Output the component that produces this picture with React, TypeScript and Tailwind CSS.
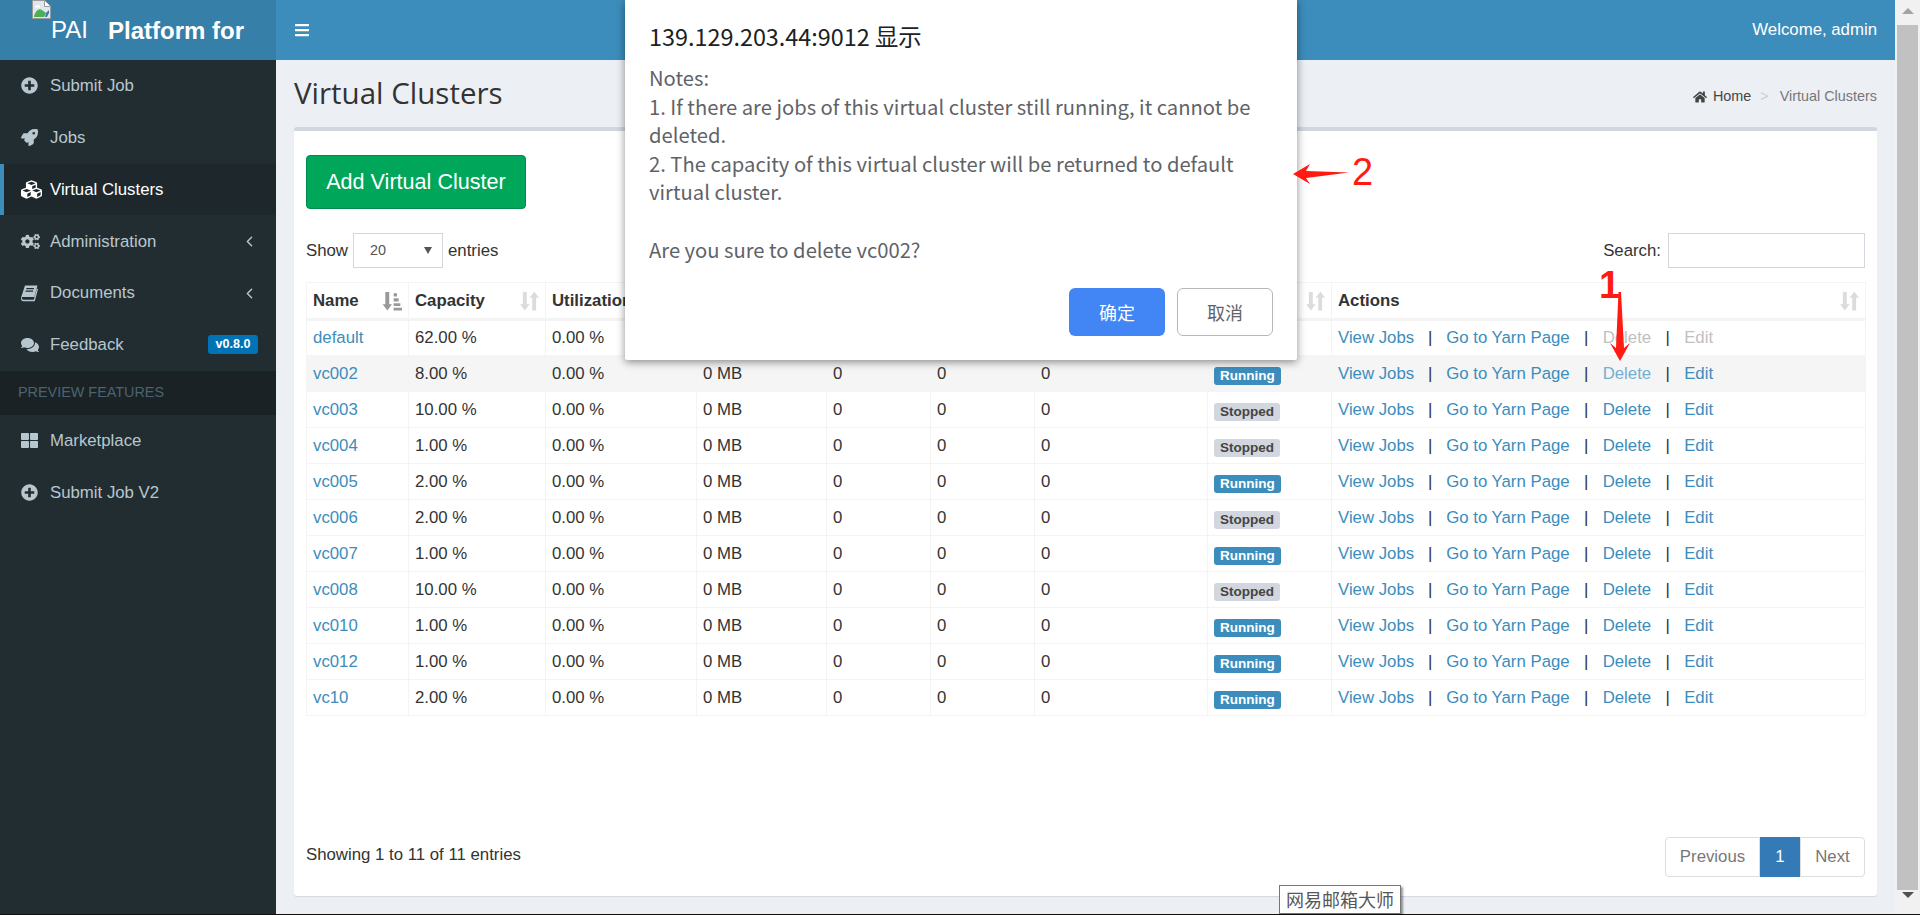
import { FaBars, FaCogs, FaComments, FaCubes, FaHome, FaPlusCircle, FaRocket, FaThLarge } from 'react-icons/fa';
import { FiChevronLeft } from 'react-icons/fi';
import type { ReactNode } from 'react';

type Row = { name: string; capacity: string; running: boolean };

const rows: Row[] = [
  { name: 'default', capacity: '62.00 %', running: true },
  { name: 'vc002', capacity: '8.00 %', running: true },
  { name: 'vc003', capacity: '10.00 %', running: false },
  { name: 'vc004', capacity: '1.00 %', running: false },
  { name: 'vc005', capacity: '2.00 %', running: true },
  { name: 'vc006', capacity: '2.00 %', running: false },
  { name: 'vc007', capacity: '1.00 %', running: true },
  { name: 'vc008', capacity: '10.00 %', running: false },
  { name: 'vc010', capacity: '1.00 %', running: true },
  { name: 'vc012', capacity: '1.00 %', running: true },
  { name: 'vc10', capacity: '2.00 %', running: true },
];

const columns = [
  { label: 'Name', width: 'w-[102px]', active: true },
  { label: 'Capacity', width: 'w-[137px]' },
  { label: 'Utilization', width: 'w-[151px]' },
  { label: '', width: 'w-[130px]' },
  { label: '', width: 'w-[104px]' },
  { label: '', width: 'w-[104px]' },
  { label: '', width: 'w-[173px]' },
  { label: '', width: 'w-[124px]' },
  { label: 'Actions', width: 'w-[534px]' },
];

const SortIcon = ({ active }: { active?: boolean }) => (
  <svg viewBox="0 0 18 18" className="h-[20px] w-[20px]">
    {active ? (
      <g fill="#999999">
        <path d="M3 1h3.5v11H9l-4.2 5.5L.6 12H3z" />
        <path d="M10.5 2h3v3h-3zM10.5 6.5h4.5v3h-4.5zM10.5 11h6v2.6h-6zM10.5 15h7.5v2.6h-7.5z" />
      </g>
    ) : (
      <g fill="#dcdcdc">
        <path d="M3.5 1H7v11h2.6l-4.3 5.5L1 12h2.5z" />
        <path d="M13.8.5 18 6h-2.6v11.5h-3.5V6H9.5z" />
      </g>
    )}
  </svg>
);

// FA4 book is slanted, the FA5 one in react-icons is not
const SlantedBook = () => (
  <svg viewBox="0 0 17 17" className="h-[17px] w-[17px]" fill="currentColor">
    <path d="M4 .5h12.5l-3.2 11.6H1.6C.9 12.1.6 12.9.8 13.6c.2.8.9 1.2 1.6 1.2h10.4l3.2-11.2 1 .6-3.3 12H2.3C1 16.2.1 15.3 0 14c-.1-.8 0-1.4.3-2.2z" />
    <path d="M5.5 3h7.6l-.3 1.2H5.2zM4.7 5.6h7.6L12 6.8H4.4z" fill="#222d32" />
  </svg>
);

const NavItem = ({ icon, label, active, right }: { icon: ReactNode; label: string; active?: boolean; right?: ReactNode }) => (
  <div
    className={`flex h-[51.8px] items-center border-l-[4px] pl-[17px] pr-[18px] ${
      active ? 'border-[#3c8dbc] bg-[#1e282c] text-white' : 'border-transparent text-[#b8c7ce]'
    }`}
  >
    <span className="flex w-[29px] shrink-0 items-center text-[17px]">{icon}</span>
    <span className="flex-1">{label}</span>
    {right}
  </div>
);

const Sidebar = () => (
  <aside className="flex w-[276px] shrink-0 flex-col bg-[#222d32] text-[16.8px]">
    <div className="flex h-[60px] shrink-0 bg-[#367fa9] pl-[32px] text-white">
      <div className="relative w-[76px]">
        <svg viewBox="0 0 19 19" className="absolute left-0 top-0 h-[19px] w-[19px]">
          <path d="M.5.5h12l6 6v12H.5z" fill="#dfe7f3" stroke="#9a9a9a" />
          <path d="M12.5.5v6h6" fill="#ffffff" stroke="#9a9a9a" />
          <path d="M2 16c2-6 5-8 8-6l4 3-2 4H2z" fill="#4caf50" />
          <path d="M14 13l3-3v3l-2 4h-2z" fill="#3b78c2" />
          <path d="M3 5.5h5v2H3z" fill="#ffffff" />
        </svg>
        <span className="absolute left-[19px] top-[17px] text-[24px] leading-[26px]">PAI</span>
      </div>
      <span className="pt-[17px] text-[24px] font-bold leading-[28px]">Platform for</span>
    </div>
    <NavItem icon={<FaPlusCircle />} label="Submit Job" />
    <NavItem icon={<FaRocket />} label="Jobs" />
    <NavItem icon={<FaCubes className="text-[21px]" />} label="Virtual Clusters" active />
    <NavItem icon={<FaCogs className="text-[19px]" />} label="Administration" right={<FiChevronLeft className="text-[17px]" />} />
    <NavItem icon={<SlantedBook />} label="Documents" right={<FiChevronLeft className="text-[17px]" />} />
    <NavItem
      icon={<FaComments className="text-[18px]" />}
      label="Feedback"
      right={<span className="rounded-[3px] bg-[#0073b7] px-[7.5px] py-[1px] text-[12.6px] font-bold leading-[17px] text-white">v0.8.0</span>}
    />
    <div className="flex h-[44px] items-center bg-[#1a2226] pl-[18px] text-[14.4px] text-[#4b646f]">PREVIEW FEATURES</div>
    <NavItem icon={<FaThLarge />} label="Marketplace" />
    <NavItem icon={<FaPlusCircle />} label="Submit Job V2" />
  </aside>
);

const ActionLinks = ({ first, hover }: { first?: boolean; hover?: boolean }) => (
  <div className="flex">
    <a className="text-[#3c8dbc]">View Jobs</a>
    <span className="w-[32px] text-center text-[#333333]">|</span>
    <a className="text-[#3c8dbc]">Go to Yarn Page</a>
    <span className="w-[33px] text-center text-[#333333]">|</span>
    <a className={first ? 'text-[#c0c0c0]' : hover ? 'text-[#72afd2]' : 'text-[#3c8dbc]'}>Delete</a>
    <span className="w-[33px] text-center text-[#333333]">|</span>
    <a className={first ? 'text-[#c0c0c0]' : 'text-[#3c8dbc]'}>Edit</a>
  </div>
);

const VcTable = () => (
  <table className="w-[1559px] table-fixed border-collapse text-[16.8px] text-[#333333]">
    <colgroup>
      {columns.map((col, i) => (
        <col key={i} className={col.width} />
      ))}
    </colgroup>
    <thead>
      <tr className="h-[37px] border-b-[3px] border-[#f4f4f4]">
        {columns.map((col, i) => (
          <th key={i} className="border border-b-[3px] border-[#f4f4f4] px-[6px] text-left font-bold">
            <div className="flex items-center justify-between">
              <span className="whitespace-nowrap">{col.label}</span>
              <SortIcon active={col.active} />
            </div>
          </th>
        ))}
      </tr>
    </thead>
    <tbody>
      {rows.map((row, i) => (
        <tr key={row.name} className={`h-[36px] ${i === 1 ? 'bg-[#f5f5f5]' : ''}`}>
          <td className="border border-[#f4f4f4] px-[6px] text-[#3c8dbc]">{row.name}</td>
          <td className="border border-[#f4f4f4] px-[6px]">{row.capacity}</td>
          <td className="border border-[#f4f4f4] px-[6px]">0.00 %</td>
          <td className="border border-[#f4f4f4] px-[6px]">0 MB</td>
          <td className="border border-[#f4f4f4] px-[6px]">0</td>
          <td className="border border-[#f4f4f4] px-[6px]">0</td>
          <td className="border border-[#f4f4f4] px-[6px]">0</td>
          <td className="border border-[#f4f4f4] px-[6px] pt-[2px]">
            <span
              className={`inline-block rounded-[3px] px-[6px] text-[13.5px] font-bold leading-[18px] ${
                row.running ? 'bg-[#3c8dbc] text-white' : 'bg-[#d2d6de] text-[#444444]'
              }`}
            >
              {row.running ? 'Running' : 'Stopped'}
            </span>
          </td>
          <td className="border border-[#f4f4f4] px-[6px]">
            <ActionLinks first={i === 0} hover={i === 1} />
          </td>
        </tr>
      ))}
    </tbody>
  </table>
);

const Pagination = () => (
  <div className="flex h-[40px] items-stretch text-[16.8px] text-[#777777]">
    <span className="flex w-[95px] items-center justify-center rounded-l-[4px] border border-[#dddddd]">Previous</span>
    <span className="flex w-[40px] items-center justify-center bg-[#337ab7] text-white">1</span>
    <span className="flex w-[65px] items-center justify-center rounded-r-[4px] border border-[#dddddd]">Next</span>
  </div>
);

const ConfirmDialog = () => (
  <div className="absolute left-[625px] top-0 h-[360px] w-[672px] rounded-b-[2px] bg-white px-[24px] pt-[20px] font-['Noto_Sans_CJK_SC',sans-serif] shadow-[0_2px_8px_rgba(0,0,0,0.45)]">
    <div className="text-[23.4px] leading-[32px] text-[#202124]">139.129.203.44:9012 显示</div>
    <div className="mt-[12px] text-[20.2px] leading-[28.6px] text-[#5f6368]">
      <div>Notes:</div>
      <div>1. If there are jobs of this virtual cluster still running, it cannot be deleted.</div>
      <div>2. The capacity of this virtual cluster will be returned to default virtual cluster.</div>
      <div className="h-[28.6px]" />
      <div>Are you sure to delete vc002?</div>
    </div>
    <div className="absolute bottom-[24px] right-[24px] flex gap-[12px] text-[18px]">
      <div className="flex h-[48px] w-[96px] items-center justify-center rounded-[6px] bg-[#4285f4] text-white">确定</div>
      <div className="flex h-[48px] w-[96px] items-center justify-center rounded-[6px] border border-[#b8b8b8] bg-white text-[#5f6368]">取消</div>
    </div>
  </div>
);

const Annotations = () => (
  <>
    <svg viewBox="0 0 1920 915" className="pointer-events-none absolute inset-0 h-[915px] w-[1920px]">
      <path d="M1618.5 292h2.5l3 56 6-5-10 18-10-18 6 5z" fill="#ff1a12" />
      <path d="M1293 174l17-10-4 7 43 1.500-43 5.500 4 6z" fill="#ff1a12" />
    </svg>
    <span className="absolute left-[1599px] top-[265px] font-['Liberation_Sans',sans-serif] text-[38px] font-bold leading-[40px] text-[#ff1a12]">1</span>
    <span className="absolute left-[1352px] top-[150px] font-['Liberation_Sans',sans-serif] text-[38px] leading-[44px] text-[#ff1a12]">2</span>
    <div className="absolute left-[1279px] top-[885px] flex h-[29px] w-[122px] items-center justify-center border border-[#767676] bg-white font-['Noto_Sans_CJK_SC',sans-serif] text-[18px] text-[#575757] shadow-[2px_2px_2px_rgba(0,0,0,0.4)]">
      网易邮箱大师
    </div>
  </>
);

export default function App() {
  return (
    <div className="relative flex h-[915px] w-[1920px] overflow-hidden font-['Liberation_Sans',Arial,sans-serif] text-[#333333]">
      <Sidebar />
      <div className="flex min-w-0 flex-1 flex-col bg-[#ecf0f5]">
        <header className="flex h-[60px] shrink-0 items-center justify-between bg-[#3c8dbc] pl-[18px] pr-[18px] text-[16.8px] text-white">
          <FaBars className="text-[16px]" />
          <span>Welcome, admin</span>
        </header>
        <div className="flex h-[67px] shrink-0 items-center justify-between px-[18px]">
          <h1 className="font-['Open_Sans',sans-serif] text-[29.5px] text-[#333333]">Virtual Clusters</h1>
          <div className="flex items-center pt-[7px] text-[14.4px] text-[#444444]">
            <FaHome className="mr-[6px] text-[14px]" />
            <span>Home</span>
            <span className="ml-[9px] mr-[11px] text-[#cccccc]">&gt;</span>
            <span className="text-[#777777]">Virtual Clusters</span>
          </div>
        </div>
        <main className="mx-[18px] flex h-[769px] shrink-0 flex-col rounded-[3px] border-t-[4px] border-[#d2d6de] bg-white px-[12px] pt-[24px] text-[16.8px] shadow-[0_1px_1px_rgba(0,0,0,0.1)]">
          <button className="h-[54px] w-[220px] rounded-[4px] border border-[#008d4c] bg-[#00a65a] text-[21.6px] text-white">Add Virtual Cluster</button>
          <div className="mt-[24px] flex h-[35px] items-center justify-between">
            <div className="flex items-center gap-[5px]">
              <span>Show</span>
              <div className="flex h-[35px] w-[90px] items-center justify-between border border-[#d2d6de] pl-[16px] pr-[10px] text-[14.4px] text-[#555555]">
                <span>20</span>
                <span className="h-0 w-0 border-x-[4px] border-t-[7px] border-x-transparent border-t-[#555555]" />
              </div>
              <span>entries</span>
            </div>
            <div className="flex items-center gap-[7px]">
              <span>Search:</span>
              <div className="h-[35px] w-[197px] border border-[#d2d6de]" />
            </div>
          </div>
          <div className="mt-[14px]">
            <VcTable />
          </div>
          <div className="mt-[121px] flex items-center justify-between">
            <span className="pb-[4px]">Showing 1 to 11 of 11 entries</span>
            <Pagination />
          </div>
        </main>
      </div>
      <div className="flex w-[25px] shrink-0 flex-col items-center bg-[#f1f1f1] pt-[8px]">
        <span className="h-0 w-0 border-x-[6px] border-b-[6px] border-x-transparent border-b-[#a3a3a3]" />
        <div className="mt-[11px] h-[865px] w-[21px] bg-[#c1c1c1]" />
        <span className="mt-[2px] h-0 w-0 border-x-[6px] border-t-[6px] border-x-transparent border-t-[#505050]" />
      </div>
      <div className="absolute bottom-0 left-0 h-[1px] w-full bg-[#111111]" />
      <ConfirmDialog />
      <Annotations />
    </div>
  );
}
